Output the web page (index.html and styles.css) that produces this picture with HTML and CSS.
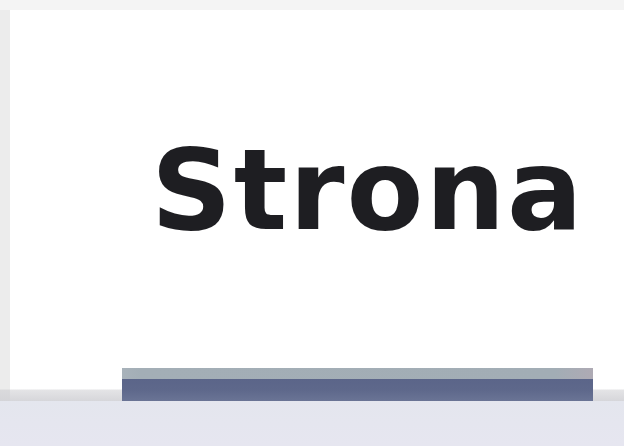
FILE: index.html
```html
<!DOCTYPE html>
<html>
<head>
<meta charset="utf-8">
<link rel="stylesheet" href="styles.css">
</head>
<body>
<div class="page">
  <div class="topbar"></div>
  <div class="middle">
    <div class="side"></div>
    <main class="content">
      <h1 class="title">Strona</h1>
      <div class="bar"><div class="bar-top"></div><div class="bar-bottom"></div></div>
    </main>
  </div>
  <footer class="footer"></footer>
</div>
</body>
</html>
```
FILE: styles.css
```css
html, body { margin: 0; padding: 0; }
body { width: 624px; height: 446px; overflow: hidden; font-family: "DejaVu Sans", sans-serif; }
.page { display: flex; flex-direction: column; height: 446px; }
.topbar { height: 10px; background: #f4f4f4; flex: none; }
.middle { display: flex; height: 391px; flex: none;
  background: linear-gradient(to bottom, #ffffff 0, #ffffff 379px, #e4e4e6 380px, #d6d6da 391px); }
.side { width: 10px; flex: none;
  background: linear-gradient(to bottom, #ececec 0, #ececec 379px, #dadadc 380px, #d4d4d8 391px); }
.content { flex: 1; display: flex; flex-direction: column; padding: 124px 0 0 141px; }
.title { margin: 0; font-family: "DejaVu Sans", sans-serif; font-weight: bold; font-size: 112px; line-height: 112px; color: #1e1e22; letter-spacing: 2px; }
.bar { margin-top: auto; margin-left: -29px; width: 471px; height: 33px; display: flex; flex-direction: column; }
.bar-top { height: 11px; background: linear-gradient(to right, #a8b2ba 0, #a3aeb6 4%, #a2adb5 92%, #aeaab4 100%); }
.bar-bottom { flex: 1; background: linear-gradient(to bottom, #5b6589 0, #5e688b 50%, #6a7495 100%); }
.footer { flex: 1; background: linear-gradient(to bottom, #e4e6ee 0, #e6e6f0 100%); }
```
